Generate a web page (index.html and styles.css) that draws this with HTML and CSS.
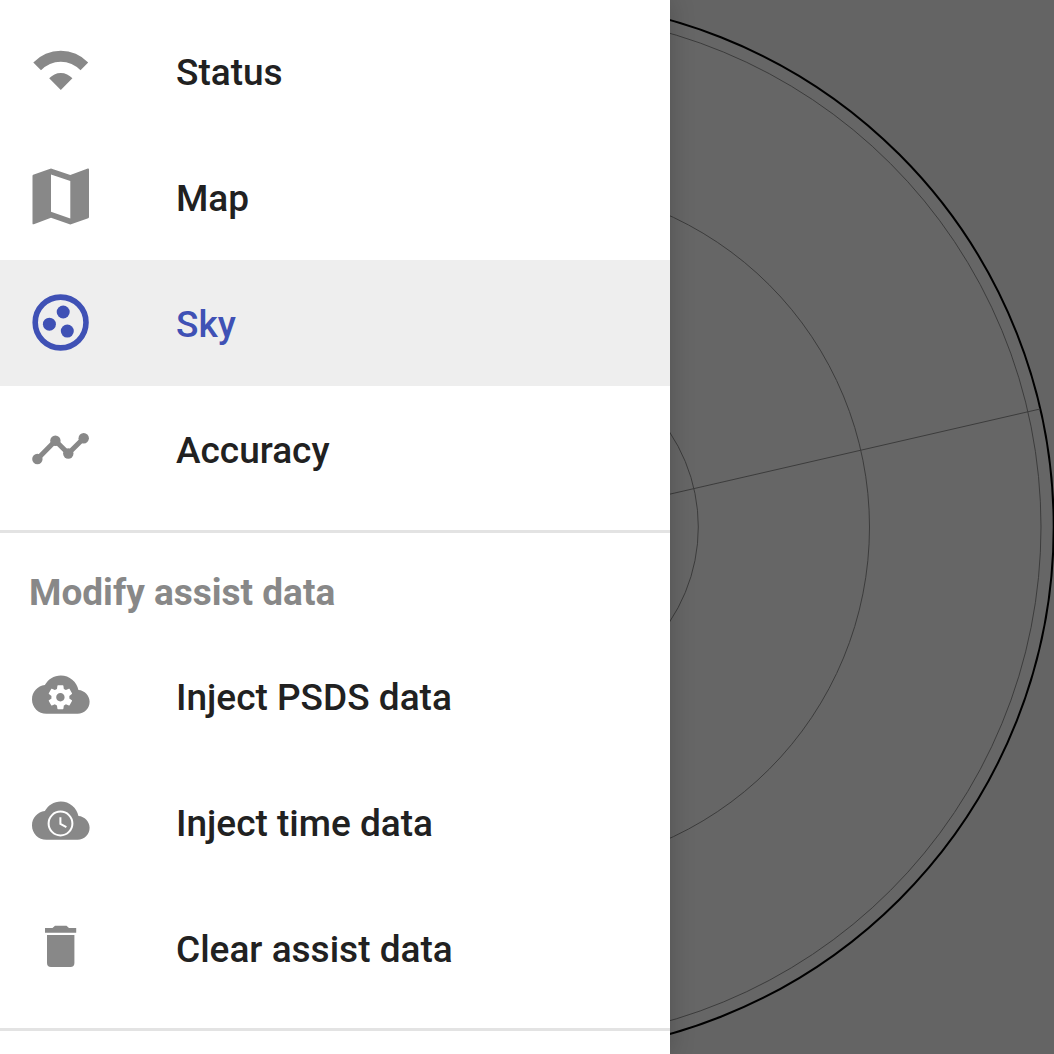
FILE: index.html
```html
<!DOCTYPE html>
<html lang="en">
<head>
<meta charset="utf-8">
<meta name="viewport" content="width=device-width, initial-scale=1">
<title>Sky</title>
<link rel="stylesheet" href="styles.css">
</head>
<body>
<main class="sky">
  <svg class="sky-plot" viewBox="0 0 1054 1054" aria-hidden="true">
    <circle class="horizon" cx="527" cy="527" r="526.7"/>
    <circle class="grid" cx="527" cy="527" r="514"/>
    <circle class="grid" cx="527" cy="527" r="342.5"/>
    <circle class="grid" cx="527" cy="527" r="171.3"/>
    <path class="grid" d="M527 527L1040 409"/>
  </svg>
</main>
<aside class="drawer">
  <nav class="views" aria-label="Views">
    <a class="item" href="#status">
      <svg class="icon" viewBox="0 0 58 58" aria-hidden="true"><path d="M1.3 20.5A37.8 37.8 0 0 1 56.2 20.5L48.5 28.3A27 27 0 0 0 9 28.3ZM17.2 36.2A15.6 15.6 0 0 1 40.4 36.2L28.8 47.9Z"/></svg>
      <span class="label">Status</span>
    </a>
    <a class="item" href="#map">
      <svg class="icon" viewBox="0 0 58 58" aria-hidden="true"><path fill-rule="evenodd" d="M.5 7.8Q.5 7 1.2 6.7L19 .4 38.3 7 55.8.6Q57 .3 57 1.5V49Q57 50 56.2 50.3L38.3 56.5 19 49.8 1.8 56.3Q.5 56.6.5 55.5ZM19 6.4V43.8L38.3 50.4V13Z"/></svg>
      <span class="label">Map</span>
    </a>
    <a class="item selected" href="#sky" aria-current="page">
      <svg class="icon" viewBox="0 0 58 58" aria-hidden="true"><circle class="ring" cx="28.6" cy="28.5" r="25.4"/><circle cx="31.2" cy="18" r="6.5"/><circle cx="17.4" cy="30.2" r="6.5"/><circle cx="35.3" cy="37.1" r="6.5"/></svg>
      <span class="label">Sky</span>
    </a>
    <a class="item" href="#accuracy">
      <svg class="icon" viewBox="0 0 58 58" aria-hidden="true"><path class="trend" d="M5.4 39L23.4 20.8 36.3 33.5 51.7 18.3"/><circle cx="5.4" cy="39" r="5.2"/><circle cx="23.4" cy="20.8" r="5.2"/><circle cx="36.3" cy="33.5" r="5.2"/><circle cx="51.7" cy="18.3" r="5.2"/></svg>
      <span class="label">Accuracy</span>
    </a>
  </nav>
  <section class="assist">
    <h2 class="heading">Modify assist data</h2>
    <button class="item" type="button">
      <svg class="icon" viewBox="0 0 58 58" aria-hidden="true"><path transform="translate(0 -1.2) scale(2.4)" d="M19.35 10.04C18.67 6.59 15.64 4 12 4 9.11 4 6.6 5.64 5.35 8.04 2.34 8.36 0 10.91 0 14c0 3.31 2.69 6 6 6h13c2.76 0 5-2.24 5-5 0-2.64-2.05-4.78-4.65-4.96z"/><path class="cutout" transform="translate(14 15.8) scale(1.2)" d="M19.43 12.98c.04-.32.07-.64.07-.98s-.03-.66-.07-.98l2.11-1.65c.19-.15.24-.42.12-.64l-2-3.46c-.12-.22-.39-.3-.61-.22l-2.49 1c-.52-.4-1.08-.73-1.69-.98l-.38-2.65C14.46 2.18 14.25 2 14 2h-4c-.25 0-.46.18-.49.42l-.38 2.65c-.61.25-1.17.59-1.69.98l-2.49-1c-.23-.09-.49 0-.61.22l-2 3.46c-.13.22-.07.49.12.64l2.11 1.65c-.04.32-.07.65-.07.98s.03.66.07.98l-2.11 1.65c-.19.15-.24.42-.12.64l2 3.46c.12.22.39.3.61.22l2.49-1c.52.4 1.08.73 1.69.98l.38 2.65c.03.24.24.42.49.42h4c.25 0 .46-.18.49-.42l.38-2.65c.61-.25 1.17-.59 1.69-.98l2.49 1c.23.09.49 0 .61-.22l2-3.46c.12-.22.07-.49-.12-.64l-2.11-1.65zM12 15.5c-1.93 0-3.5-1.57-3.5-3.5s1.57-3.5 3.5-3.5 3.5 1.57 3.5 3.5-1.57 3.5-3.5 3.5z"/></svg>
      <span class="label">Inject PSDS data</span>
    </button>
    <button class="item" type="button">
      <svg class="icon" viewBox="0 0 58 58" aria-hidden="true"><path transform="translate(0 -1.2) scale(2.4)" d="M19.35 10.04C18.67 6.59 15.64 4 12 4 9.11 4 6.6 5.64 5.35 8.04 2.34 8.36 0 10.91 0 14c0 3.31 2.69 6 6 6h13c2.76 0 5-2.24 5-5 0-2.64-2.05-4.78-4.65-4.96z"/><circle class="clock" cx="28.5" cy="30.5" r="11.9"/><path class="clock" d="M28.4 24.2V31L34.4 34.2"/></svg>
      <span class="label">Inject time data</span>
    </button>
    <button class="item" type="button">
      <svg class="icon" viewBox="0 0 58 58" aria-hidden="true"><path d="M13 9H20.5L23 6.8H34.5L37 9H44.2V13.8H13ZM15 16H42.4V44Q42.4 48 38.4 48H19Q15 48 15 44Z"/></svg>
      <span class="label">Clear assist data</span>
    </button>
  </section>
</aside>
</body>
</html>
```
FILE: styles.css
```css
* {
  box-sizing: border-box;
}

body {
  margin: 0;
  min-height: 100vh;
  position: relative;
  overflow: hidden;
  background: #646464;
  color: #212121;
  font: 500 37px/44px Roboto, sans-serif;
}

.sky-plot {
  display: block;
  width: 100%;
  fill: none;
}

.horizon {
  fill: #666;
  stroke: #000;
  stroke-width: 2;
}

.grid {
  stroke: #3c3c3c;
  stroke-width: 1;
}

/* The drawer slides in over the dimmed sky view. */
.drawer {
  position: absolute;
  top: 0;
  left: 0;
  width: 670px;
  max-width: 100%;
  min-height: 100%;
  background: #fff;
  box-shadow: 0 0 24px rgba(0, 0, 0, 0.2);
}

.views {
  padding: 8px 0 18px;
  border-bottom: 3px solid #e3e3e3;
}

.assist {
  padding-bottom: 17px;
  border-bottom: 3px solid #e3e3e3;
}

.heading {
  margin: 0;
  padding: 38px 29px 18px;
  color: #888;
  font-size: 37px;
  font-weight: 700;
}

.item {
  display: flex;
  align-items: center;
  gap: 86px;
  width: 100%;
  height: 126px;
  padding: 0 32px;
  border: 0;
  background: none;
  color: inherit;
  font: inherit;
  text-align: left;
  text-decoration: none;
}

.label {
  padding-top: 3px;
}

.selected {
  background: #eee;
  color: #3f51b5;
}

.icon {
  flex: none;
  width: 58px;
  height: 58px;
  fill: #888;
}

.selected .icon {
  fill: #3f51b5;
}

.ring {
  fill: none;
  stroke: #3f51b5;
  stroke-width: 5.6;
}

.trend {
  fill: none;
  stroke: #888;
  stroke-width: 5;
}

.cutout {
  fill: #fff;
}

.clock {
  fill: none;
  stroke: #fff;
  stroke-width: 2;
}
```
